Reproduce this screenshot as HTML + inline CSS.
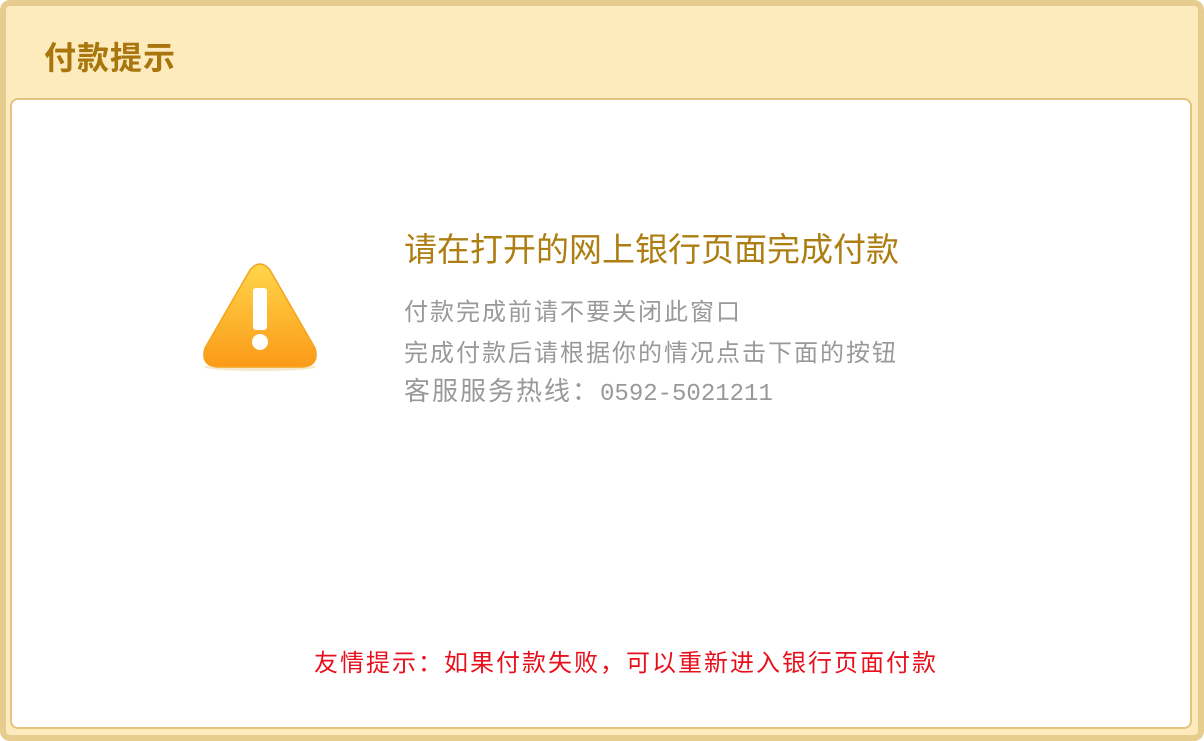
<!DOCTYPE html>
<html><head><meta charset="utf-8"><style>
body{margin:0;width:1204px;height:741px;overflow:hidden;font-family:"Liberation Sans","Noto Sans CJK SC",sans-serif;background:#fff}
.outer{position:absolute;left:0;top:0;width:1192px;height:729px;border:6px solid #e6cc8e;border-radius:10px;background:#fdebbe}
.title{position:absolute;left:38px;top:27px;font-size:32px;color:#a8760c;font-weight:bold;letter-spacing:1px}
.inner{position:absolute;left:4px;top:92px;width:1178px;height:627px;border:2px solid #e3c47f;border-radius:8px;background:#fff}
.h{position:absolute;left:404px;top:230px;font-size:33px;line-height:40px;color:#ad7e12;white-space:nowrap}
.g{position:absolute;left:404px;font-size:24px;line-height:30px;letter-spacing:2px;color:#999;white-space:nowrap}
.r{position:absolute;left:314px;top:649px;font-size:24px;line-height:30px;letter-spacing:2px;color:#e8101c;white-space:nowrap}
</style></head><body>
<div class="outer"><div class="title">付款提示</div><div class="inner"></div></div>
<svg style="position:absolute;left:198px;top:260px" width="126" height="116" viewBox="0 0 126 116">
<defs><linearGradient id="a" x1="0" y1="0" x2="0" y2="1"><stop offset="0" stop-color="#ffd64a"/><stop offset="1" stop-color="#fb9a18"/></linearGradient></defs>
<ellipse cx="62" cy="107" rx="56" ry="4" fill="#f1dfb8" opacity=".7"/>
<path d="M52 10 Q62 -2 72 10 L117 88 Q122 106 104 107 L20 107 Q2 106 7 88 Z" fill="url(#a)" stroke="#f4a41c" stroke-width="1.5"/>
<rect x="55" y="28" width="14" height="42" rx="3" fill="#fff"/>
<circle cx="62" cy="82" r="8" fill="#fff"/>
</svg>
<div class="h">请在打开的网上银行页面完成付款</div>
<div class="g" style="top:298px">付款完成前请不要关闭此窗口</div>
<div class="g" style="top:339px">完成付款后请根据你的情况点击下面的按钮</div>
<div class="g" style="top:376px;font-size:26px">客服服务热线：<span style="font-family:'Liberation Mono',monospace;font-size:24px;letter-spacing:0">0592-5021211</span></div>
<div class="r">友情提示：如果付款失败，可以重新进入银行页面付款</div>
</body></html>
